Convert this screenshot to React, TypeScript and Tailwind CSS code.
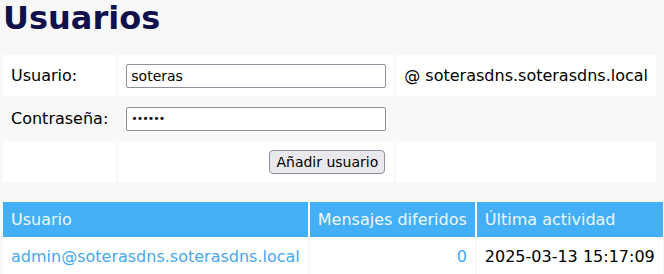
const font = { fontFamily: '"DejaVu Sans", Verdana, sans-serif' };

const users = [
  { email: 'admin@soterasdns.soterasdns.local', deferred: 0, lastSeen: '2025-03-13 15:17:09' },
];

export default function App() {
  return (
    <div className="min-h-[274px] bg-[#f8f8f8] pl-[1px] text-black" style={font}>
      {/* Title */}
      <h1 className="mb-[16px] pl-[2px] text-[32px] font-bold leading-[37px] text-[#10104a]">Usuarios</h1>

      {/* New user form */}
      <table className="border-separate border-spacing-[2px] whitespace-nowrap text-[16px] leading-[19px]">
        <tbody>
          <tr className="bg-white">
            <td className="h-[41px] w-[113px] px-2 align-middle">Usuario:</td>
            <td className="h-[41px] px-2 align-middle">
              <input
                type="text"
                defaultValue="soteras"
                className="block h-[24px] w-[260px] rounded-[2px] border border-[#8f8f9d] bg-white px-1 text-[14px] leading-[16px] text-black outline-none"
                style={font}
              />
            </td>
            <td className="h-[41px] px-2 align-middle">@ soterasdns.soterasdns.local</td>
          </tr>
          <tr>
            <td className="h-[41px] px-2 align-middle">Contraseña:</td>
            <td className="h-[41px] px-2 align-middle">
              <input
                type="password"
                defaultValue="secret"
                className="block h-[24px] w-[260px] rounded-[2px] border border-[#8f8f9d] bg-white px-1 text-[11px] leading-[16px] tracking-[-1px] text-black outline-none"
                style={font}
              />
            </td>
            <td className="h-[41px] px-2"></td>
          </tr>
          <tr className="bg-white">
            <td className="h-[41px] px-2"></td>
            <td className="h-[41px] px-2 text-right align-middle">
              <button
                type="button"
                className="mr-[1px] h-[24px] whitespace-nowrap rounded-[4px] border border-[#8f8f9d] bg-[#e9e9ed] px-[6px] text-[14px] leading-[16px] text-black"
                style={font}
              >
                Añadir usuario
              </button>
            </td>
            <td className="h-[41px] px-2"></td>
          </tr>
        </tbody>
      </table>

      {/* Users list */}
      <table className="mt-4 w-full border-separate border-spacing-[2px] whitespace-nowrap text-[16px] leading-[19px]">
        <thead>
          <tr className="bg-[#42aff6] text-left text-[#eef8ff]">
            <th className="h-[35px] px-2 font-normal">Usuario</th>
            <th className="h-[35px] px-2 font-normal">Mensajes diferidos</th>
            <th className="h-[35px] px-2 font-normal">Última actividad</th>
          </tr>
        </thead>
        <tbody>
          {users.map((u) => (
            <tr key={u.email} className="bg-white">
              <td className="h-[35px] px-2 text-[#45a8f2]">{u.email}</td>
              <td className="h-[35px] px-2 text-right text-[#45a8f2]">{u.deferred}</td>
              <td className="h-[35px] px-2">{u.lastSeen}</td>
            </tr>
          ))}
        </tbody>
      </table>
    </div>
  );
}
